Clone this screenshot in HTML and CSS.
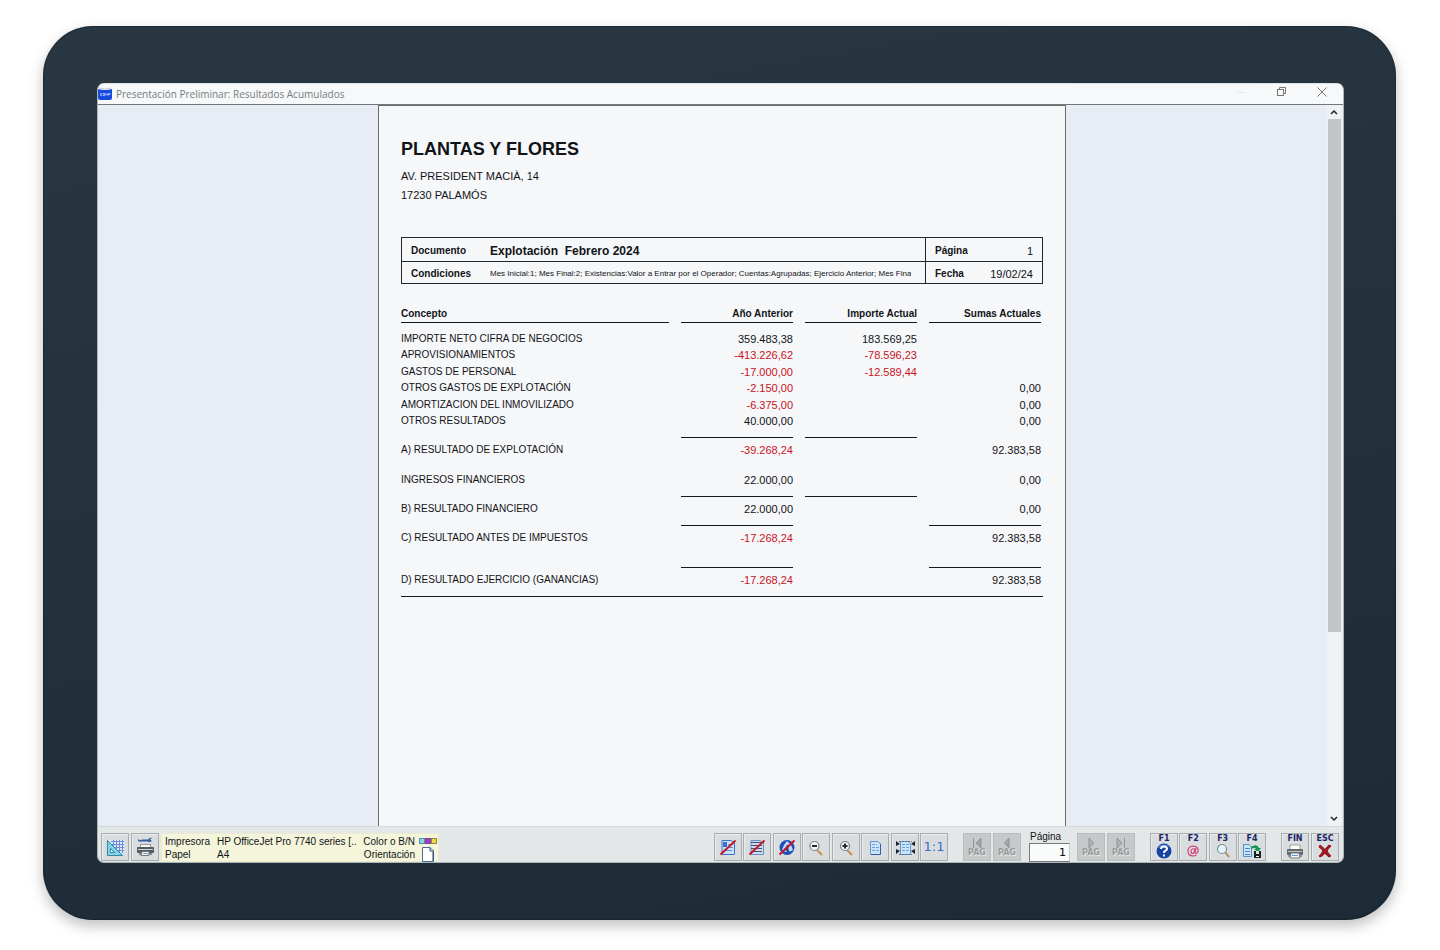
FILE: index.html
```html
<!DOCTYPE html>
<html lang="es">
<head>
<meta charset="utf-8">
<title>Presentación Preliminar: Resultados Acumulados</title>
<link rel="stylesheet" href="styles.css">
</head>
<body>
<div class="device">
<main class="window">
  <header class="titlebar">
    <svg class="app-logo" width="14" height="14" viewBox="0 0 14 14" aria-hidden="true"><path d="M0 2Q7 4 14 2V11Q14 13 12 13H2Q0 13 0 11Z" fill="#174be0"/><path d="M1 1Q7 3 13 1" stroke="#c9cdd6" fill="none"/><path d="M4 6.500H2.500V8.500H4M5 6.500H6.500V8.500H5ZM7.500 8.500V6.500L8.500 7.500L9.500 6.500V8.500M10.500 8.500V6.500H12V7.500H10.500" fill="none" stroke="#c8d8ff" stroke-width=".7"/></svg>
    <h1 class="window-title">Presentación Preliminar: Resultados Acumulados</h1>
    <div class="window-controls">
      <button aria-label="Minimizar"><svg width="12" height="12" viewBox="0 0 12 12"><path d="M1 6.500H10" stroke="#e4e6e8"/></svg></button>
      <button aria-label="Restaurar"><svg width="12" height="12" viewBox="0 0 12 12" fill="none" stroke="#777"><rect x="1.500" y="3.500" width="6" height="6"/><path d="M3.500 3.500V1.500H9.500V7.500H7.500"/></svg></button>
      <button aria-label="Cerrar"><svg width="12" height="12" viewBox="0 0 12 12"><path d="M1.500 1.500L10.500 10.500M10.500 1.500L1.500 10.500" stroke="#777" fill="none"/></svg></button>
    </div>
  </header>

  <section class="workspace">
    <article class="paper">
      <h2 class="company">PLANTAS Y FLORES</h2>
      <p class="address">AV. PRESIDENT MACIÀ, 14<br>17230 PALAMÓS</p>

      <dl class="doc-info">
        <div class="info-cell"><dt>Documento</dt><dd class="doc-name">Explotación&nbsp; Febrero 2024</dd></div>
        <div class="info-cell side"><dt>Página</dt><dd>1</dd></div>
        <div class="info-cell"><dt>Condiciones</dt><dd class="conditions">Mes Inicial:1; Mes Final:2; Existencias:Valor a Entrar por el Operador; Cuentas:Agrupadas; Ejercicio Anterior; Mes Fina</dd></div>
        <div class="info-cell side"><dt>Fecha</dt><dd>19/02/24</dd></div>
      </dl>

      <div class="report">
        <table class="results">
          <thead><tr><th class="concept">Concepto</th><th>Año Anterior</th><th>Importe Actual</th><th>Sumas Actuales</th></tr></thead>
          <tbody class="detail">
            <tr><td>IMPORTE NETO CIFRA DE NEGOCIOS</td><td>359.483,38</td><td>183.569,25</td><td></td></tr>
            <tr><td>APROVISIONAMIENTOS</td><td class="neg">-413.226,62</td><td class="neg">-78.596,23</td><td></td></tr>
            <tr><td>GASTOS DE PERSONAL</td><td class="neg">-17.000,00</td><td class="neg">-12.589,44</td><td></td></tr>
            <tr><td>OTROS GASTOS DE EXPLOTACIÓN</td><td class="neg">-2.150,00</td><td></td><td>0,00</td></tr>
            <tr><td>AMORTIZACION DEL INMOVILIZADO</td><td class="neg">-6.375,00</td><td></td><td>0,00</td></tr>
            <tr><td>OTROS RESULTADOS</td><td class="rule">40.000,00</td><td class="rule"></td><td>0,00</td></tr>
          </tbody>
          <tbody class="totals">
            <tr><td>A) RESULTADO DE EXPLOTACIÓN</td><td class="neg">-39.268,24</td><td></td><td>92.383,58</td></tr>
            <tr class="spaced"><td>INGRESOS FINANCIEROS</td><td class="rule">22.000,00</td><td class="rule"></td><td>0,00</td></tr>
            <tr><td>B) RESULTADO FINANCIERO</td><td class="rule">22.000,00</td><td></td><td class="rule">0,00</td></tr>
            <tr><td>C) RESULTADO ANTES DE IMPUESTOS</td><td class="rule far neg">-17.268,24</td><td></td><td class="rule far">92.383,58</td></tr>
            <tr><td>D) RESULTADO EJERCICIO (GANANCIAS)</td><td class="neg">-17.268,24</td><td></td><td>92.383,58</td></tr>
          </tbody>
        </table>
      </div>
    </article>
    <div class="scrollbar">
      <button aria-label="Subir"><svg width="8" height="6" viewBox="0 0 8 6"><path d="M1 5L4 2L7 5" stroke="#222" stroke-width="1.500" fill="none"/></svg></button>
      <div class="track"><div class="thumb"></div></div>
      <button aria-label="Bajar"><svg width="8" height="6" viewBox="0 0 8 6"><path d="M1 1L4 4L7 1" stroke="#222" stroke-width="1.500" fill="none"/></svg></button>
    </div>
  </section>

  <footer class="toolbar">
    <div class="group pair">
      <button class="tool" aria-label="Diseño"><svg viewBox="0 0 28 28"><path d="M8 7H23V20H17Z" fill="#dfe8fb"/><path d="M10 8.500H23M11 11.500H23M14 14.500H23M17 17.500H23M12.500 7V13M15.500 7V16M18.500 7V20M21.500 7V20" stroke="#6f8fd0"/><path d="M6.500 7.500V22.500H21.500Z" fill="#7ed4e6" stroke="#3686a4"/><path d="M9.500 15.500V19.500H13.500Z" fill="#f4fbfd" stroke="#3686a4"/></svg></button>
      <button class="tool" aria-label="Configurar impresora"><svg viewBox="0 0 28 28"><path d="M7 6Q9 8 11 6.500H17Q19 4 21 5L19 6.500L21 8Q18 10 17 8.500H11Q9 9 7 8Z" fill="#315f9f"/><rect x="9.500" y="11.500" width="10" height="4" fill="#f7f7f7" stroke="#999"/><rect x="6" y="14" width="17" height="6" rx="1" fill="#555b60"/><path d="M7 16.500H22" stroke="#d0d4d5"/><path d="M8 20H21V22H8Z" fill="#888"/><path d="M11 18.500H18V22.500H10Z" fill="#f5f7ff" stroke="#777"/><path d="M12 20.500H17" stroke="#6b9bd5"/></svg></button>
    </div>
    <div class="printer-info">
      <span>Impresora</span><span class="printer-name">HP OfficeJet Pro 7740 series [..</span><span class="right">Color o B/N</span>
      <svg width="18" height="6" viewBox="0 0 18 6"><rect x=".5" y=".5" width="5" height="5" fill="#80d8ee" stroke="#628797"/><rect x="6.500" y=".5" width="5" height="5" fill="#b42bdf" stroke="#6d5786"/><rect x="12.500" y=".5" width="5" height="5" fill="#f0d844" stroke="#918642"/></svg>
      <span>Papel</span><span>A4</span><span class="right">Orientación</span>
      <svg width="18" height="15" viewBox="0 0 18 15"><path d="M3.500 .5H11L14.500 4V14.500H3.500Z" fill="#fff" stroke="#47699a"/><path d="M11 .5V4H14.500M14 5V14" fill="none" stroke="#27477c"/></svg>
    </div>

    <div class="group view">
      <button class="tool" aria-label="Sin cabecera"><svg viewBox="0 0 28 28"><path d="M8 7.500H17L20.500 10V21.500H8Z" fill="#c9e1fb" stroke="#3e74c7"/><rect x="9" y="9" width="4" height="5" fill="#3d71c8"/><path d="M14 11.500H19M14 14.500H19M10 17.500H18" stroke="#5c91d0"/><path d="M6.500 21.500L21.500 7.500" stroke="#c51624" stroke-width="2"/></svg></button>
      <button class="tool" aria-label="Sin texto"><svg viewBox="0 0 28 28"><path d="M8 7.500H17L20.500 10V21.500H8Z" fill="#c6daf2" stroke="#6c91c5"/><path d="M8 9.500H19M8 12.500H19M8 15.500H19M8 18.500H19" stroke="#4a5268"/><path d="M6.500 21.500L21.500 7.500" stroke="#c51624" stroke-width="2"/></svg></button>
      <button class="tool" aria-label="Sin fondo"><svg viewBox="0 0 28 28"><circle cx="14" cy="14.500" r="7.500" fill="#1f4fbc"/><path d="M14 8L18 12L20 17Q14 21 9 17L11 12Z" fill="#c2dcf8"/><path d="M14.500 12V18M12 15L16 19" stroke="#18439c" stroke-width="2"/><path d="M6.500 21.500L21.500 7.500" stroke="#c51624" stroke-width="2"/></svg></button>
      <button class="tool" aria-label="Reducir"><svg viewBox="0 0 28 28"><path d="M15 17L20 22" stroke="#c68f4e" stroke-width="2"/><circle cx="12.500" cy="13" r="4.500" fill="#eef3f6" stroke="#77818a" stroke-width="1.200"/><path d="M10 13H15" stroke="#25282c" stroke-width="2"/></svg></button>
      <button class="tool" aria-label="Ampliar"><svg viewBox="0 0 28 28"><path d="M15 17L20 22" stroke="#c68f4e" stroke-width="2"/><circle cx="13" cy="13" r="4.500" fill="#eef3f6" stroke="#77818a" stroke-width="1.200"/><path d="M10.500 13H15.500M13 10.500V15.500" stroke="#25282c" stroke-width="2"/></svg></button>
      <button class="tool" aria-label="Página entera"><svg viewBox="0 0 28 28"><path d="M9.500 8.500H17L19.500 11V21.500H9.500Z" fill="#c9e3fb" stroke="#6599cb"/><path d="M19.500 11V21.500H10" fill="none" stroke="#2f5f9f"/><path d="M11 11.500H16M11 14.500H18M11 17.500H18" stroke="#69a4d8" stroke-dasharray="3 1"/></svg></button>
      <button class="tool" aria-label="Ajustar al ancho"><svg viewBox="0 0 28 28"><path d="M10 8.500H17L19.500 11V21.500H9.500V8.500" fill="#c9e3fb" stroke="#6599cb"/><path d="M11 11.500H18M11 14.500H18M11 17.500H18" stroke="#69a4d8" stroke-dasharray="3 1"/><path d="M5 8L9 11L5 13ZM5 16L9 18L5 21ZM24 8L20 11L24 13ZM24 16L20 18L24 21Z" fill="#20242b"/><path d="M8 8.500H21M8 21.500H21" stroke="#58718d" stroke-dasharray="2 1"/></svg></button>
      <button class="tool ratio">1:1</button>
    </div>

    <div class="group pair pager-start">
      <button class="tool page-button" disabled><svg viewBox="0 0 12 12"><path d="M2.500 1V11M10 1V11L5 6Z" fill="#a1a5a6" stroke="#8f9394"/></svg><span>PAG</span></button>
      <button class="tool page-button" disabled><svg viewBox="0 0 12 12"><path d="M8 1V11L3.500 6Z" fill="#a1a5a6" stroke="#8f9394"/></svg><span>PAG</span></button>
    </div>
    <div class="page-field"><label for="page">Página</label><input id="page" type="text" value="1"></div>
    <div class="group pair">
      <button class="tool page-button" disabled><svg viewBox="0 0 12 12"><path d="M4 1V11L8.500 6Z" fill="#b0b3b4" stroke="#8f9394"/></svg><span>PAG</span></button>
      <button class="tool page-button" disabled><svg viewBox="0 0 12 12"><path d="M9.500 1V11M2 1V11L7 6Z" fill="#b0b3b4" stroke="#8f9394"/></svg><span>PAG</span></button>
    </div>
    <div class="group keys">
      <button class="tool key"><span>F1</span><svg viewBox="0 0 20 16"><circle cx="10" cy="8" r="7.500" fill="#1743a5"/><path d="M3.500 5A7 5 0 0 1 16 4Q10 2 3.500 5" fill="#6087d7"/><path d="M7 6Q7 3.500 10 3.500Q13 3.500 13 6Q13 7 11 8Q10 8.500 10 10M10 11.500V13.500" fill="none" stroke="#fff" stroke-width="2"/></svg></button>
      <button class="tool key"><span>F2</span><svg viewBox="0 0 20 16"><path d="M13 5L12 9Q12 11 14 10Q16 8 14.500 5Q13 3 10 3Q5 3.500 5 8Q5 13 10 13Q12 13 13.500 12" fill="none" stroke="#d2386c" stroke-width="1.100"/><path d="M12 6Q9 5 8 8Q8 11 10 10.500Q12 9 12 6" fill="none" stroke="#d2386c" stroke-width="1.100"/></svg></button>
      <button class="tool key"><span>F3</span><svg viewBox="0 0 20 16"><path d="M12 9L16 14" stroke="#b98958" stroke-width="2"/><circle cx="9" cy="6" r="4.500" fill="#e6f6fb" stroke="#76909b" stroke-width="1.200"/><path d="M7 5Q8 3 10 3.500" fill="none" stroke="#fff"/></svg></button>
      <button class="tool key"><span>F4</span><svg viewBox="0 0 20 16"><path d="M1.500 1.500H7L9.500 4V13.500H1.500Z" fill="#c9e3fb" stroke="#5791c1"/><path d="M3 5.500H8M3 8.500H8M3 11.500H8" stroke="#4486c6"/><path d="M9 4Q15 0 17 5H19L16 9L12 6H14Q13 4 9 6Z" fill="#12994d"/><rect x="12" y="8" width="7" height="7" fill="#17231e"/><rect x="14" y="8" width="3" height="3" fill="#d8e8df"/><path d="M14 13.500H17" stroke="#fff"/></svg></button>
    </div>
    <div class="group pair finish">
      <button class="tool key"><span>FIN</span><svg viewBox="0 0 20 16"><path d="M5 6V2H15V6" fill="#fff" stroke="#999"/><rect x="2" y="6" width="16" height="6" rx="1" fill="#656b6e"/><path d="M3 8.500H17" stroke="#bfc3c4"/><path d="M3 12H17V14H3Z" fill="#999"/><path d="M6 10H14L15 15H5Z" fill="#eef6ff" stroke="#777"/><path d="M7 12.500H13" stroke="#5c9ad5"/></svg></button>
      <button class="tool key"><span>ESC</span><svg viewBox="0 0 20 16"><path d="M5 2Q8 4 10 6.500Q12 4 14 2L16 3Q13 6 12 8Q13 10 16 13L14 14Q11 12 10 10Q8 13 5 14L4 13Q7 10 8 8Q6 5 4 4Z" fill="#a81622" stroke="#8b1520"/></svg></button>
    </div>
  </footer>
</main>
</div>
</body>
</html>
```
FILE: styles.css
```css
* { box-sizing: border-box; }
body {
  margin: 0;
  min-height: 100vh;
  padding: 26px 44px 30px 43px;
  display: flex;
  background: #fff;
  color: #111317;
  font: 10px/16px "Liberation Sans", Arial, sans-serif;
}
h1, h2, p, dl, dd { margin: 0; }
button { font: inherit; padding: 0; border: 0; background: none; }
svg { display: block; }

.device {
  flex: 1;
  min-width: 0;
  display: flex;
  padding: 57px 52px 57px 54px;
  border-radius: 50px;
  background: linear-gradient(170deg, #293742, #1c2b35);
  box-shadow: inset 0 0 2px #0b141b, 0 6px 14px rgba(0, 0, 0, .25);
}
.window {
  flex: 1;
  min-width: 0;
  display: flex;
  flex-direction: column;
  overflow: hidden;
  border: 1px solid #aeb4b7;
  border-top-color: #dfe3e5;
  border-radius: 7px;
  background: #e3e7e7;
}

.titlebar {
  flex: none;
  height: 21px;
  display: flex;
  align-items: center;
  gap: 4px;
  border-bottom: 1px solid #73777a;
  background: #f6f8f9;
}
.window-title {
  font: 10px/16px "Open Sans", "Noto Sans", sans-serif;
  color: #777c80;
}
.window-controls {
  margin-left: auto;
  padding: 0 15px 4px 0;
  display: flex;
  gap: 28px;
}

.workspace {
  flex: 1;
  display: grid;
  grid-template-columns: 280fr 688fr 277fr;
  background: #e8ecf4;
}
.paper {
  grid-column: 2;
  min-width: 0;
  padding: 31px 22px 40px;
  border: solid #686c71;
  border-width: 1px 1px 0;
  background: #f6f7f9;
}
.company { font-size: 18px; line-height: 24px; }
.address { padding-top: 6px; font-size: 11px; line-height: 19px; }

.doc-info {
  margin-top: 32px;
  display: grid;
  grid-template-columns: minmax(0, 1fr) 117px;
  grid-template-rows: 24px 21px;
  border: 1px solid #23262a;
}
.info-cell {
  display: flex;
  align-items: center;
  padding: 2px 9px 0;
}
.info-cell:nth-child(-n+2) { border-bottom: 1px solid #23262a; }
.info-cell dt { flex: 0 0 79px; font-weight: bold; }
.info-cell.side { border-left: 1px solid #23262a; }
.info-cell.side dt { flex-basis: auto; }
.info-cell.side dd { margin-left: auto; font-size: 11px; }
.info-cell .doc-name { font-size: 12px; font-weight: bold; }
.info-cell .conditions { font-size: 8px; white-space: nowrap; overflow: hidden; }

.report {
  margin-top: 22px;
  padding-bottom: 8px;
  border-bottom: 1px solid #15181c;
}
.results {
  width: calc(100% + 22px);
  margin: 0 -12px;
  table-layout: fixed;
  border-spacing: 12px 0;
}
.results th, .results td {
  padding: 0;
  line-height: 16px;
  vertical-align: top;
  text-align: right;
  white-space: nowrap;
}
.results th { width: 112px; border-bottom: 1px solid #15181c; }
.results .concept { width: auto; }
.results th:first-child, .results td:first-child { text-align: left; }
.results td { font-size: 11px; }
.results td:first-child { font-size: 10px; }
.detail tr { height: 16px; }
.detail tr:nth-child(even) { height: 17px; }
.detail tr:first-child td { padding-top: 8px; }
.results .rule { padding-bottom: 8px; border-bottom: 1px solid #15181c; }
.totals td { padding-top: 4px; }
.totals .spaced td { padding-top: 14px; }
.results .far { padding-bottom: 21px; }
.results .neg { color: #c7131f; }

.scrollbar {
  grid-column: 3;
  justify-self: end;
  width: 14px;
  margin-right: 2px;
  display: flex;
  flex-direction: column;
  background: #f0f1f2;
}
.scrollbar button { height: 14px; padding: 0 3px; }
.track { flex: 1; }
.thumb { height: 74%; margin-left: 1px; background: #c3c5c7; }

.toolbar {
  flex: none;
  height: 36px;
  display: flex;
  align-items: center;
  padding: 5px 4px 0 3px;
  border-top: 1px solid #d3d8d9;
}
.group { flex: none; display: flex; justify-content: space-between; }
.pair { width: 58px; }
.view { width: 234px; margin-left: auto; }
.tool {
  width: 28px;
  height: 28px;
  border: 1px solid #a9adaf;
  background: #dadddf;
  box-shadow: inset 1px 1px #e9ebec;
}
.tool svg { width: 28px; height: 28px; margin: -1px; }
.ratio { color: #3c6dc5; font: 13px/24px "DejaVu Sans", sans-serif; }
.printer-info {
  width: 278px;
  height: 29px;
  margin-left: 2px;
  padding: 1px 1px 0 3px;
  display: grid;
  grid-template-columns: 52px 140px 58px 22px;
  grid-template-rows: 13px 13px;
  align-items: center;
  background: #f4f5da;
  border: 1px solid #e9eccf;
  line-height: 13px;
}
.printer-info svg { justify-self: end; }
.printer-name { white-space: nowrap; overflow: hidden; }
.right { text-align: right; }
.pager-start { margin-left: 15px; }
.page-button, .key {
  display: flex;
  flex-direction: column;
  align-items: center;
  font: bold 8px/8px "DejaVu Sans", sans-serif;
}
.page-button { color: #989c9d; background: #c6c9ca; border-color: #b9bdbe; box-shadow: none; padding-top: 3px; text-shadow: 1px 1px #e4e6e6; }
.page-button svg { width: 12px; height: 12px; margin: 0; }
.key { padding-top: 1px; color: #172565; }
.key svg { width: 20px; height: 16px; margin: 0; }
.page-field { width: 41px; margin: 0 7px 0 8px; align-self: flex-end; }
.page-field label { display: block; line-height: 12px; white-space: nowrap; text-indent: 1px; }
.page-field input {
  display: block;
  width: 100%;
  height: 19px;
  padding: 0 3px;
  border: 1px solid #777b80;
  border-right-color: #c8cbcd;
  background: #fafbfb;
  font: 11px/16px "DejaVu Sans", sans-serif;
  text-align: right;
}
.keys { width: 116px; margin-left: 15px; }
.finish { margin-left: 15px; }
```
